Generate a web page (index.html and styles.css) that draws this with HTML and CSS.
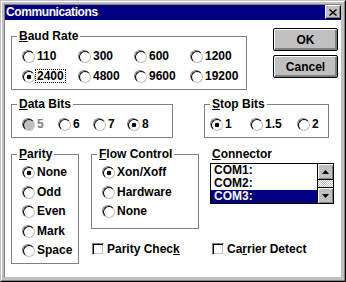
FILE: index.html
```html
<!DOCTYPE html>
<html>
<head>
<meta charset="utf-8">
<link rel="stylesheet" href="styles.css">
</head>
<body>
<div class="window">
 <div class="frame">
  <div class="inner">
   <div class="titlebar">
    <span class="title">Communications</span>
    <span class="close"><svg width="8" height="7" viewBox="0 0 8 7"><path d="M0.5 0.5 L7.5 6.5 M7.5 0.5 L0.5 6.5" stroke="#000" stroke-width="1.4" fill="none"/></svg></span>
   </div>
   <div class="body">
    <div class="row-a">
     <fieldset class="group baud">
      <legend><u>B</u>aud Rate</legend>
      <div class="grid baud-grid">
       <div class="radio"><span class="rb"></span>110</div>
       <div class="radio"><span class="rb"></span>300</div>
       <div class="radio"><span class="rb"></span>600</div>
       <div class="radio"><span class="rb"></span>1200</div>
       <div class="radio"><span class="rb on"></span><span class="focus">2400</span></div>
       <div class="radio"><span class="rb"></span>4800</div>
       <div class="radio"><span class="rb"></span>9600</div>
       <div class="radio"><span class="rb"></span>19200</div>
      </div>
     </fieldset>
     <div class="buttons">
      <div class="btn">OK</div>
      <div class="btn">Cancel</div>
     </div>
    </div>
    <div class="row-b">
     <fieldset class="group data">
      <legend><u>D</u>ata Bits</legend>
      <div class="grid data-grid">
       <div class="radio disabled"><span class="rb"></span>5</div>
       <div class="radio"><span class="rb"></span>6</div>
       <div class="radio"><span class="rb"></span>7</div>
       <div class="radio"><span class="rb on"></span>8</div>
      </div>
     </fieldset>
     <fieldset class="group stop">
      <legend><u>S</u>top Bits</legend>
      <div class="grid stop-grid">
       <div class="radio"><span class="rb on"></span>1</div>
       <div class="radio"><span class="rb"></span>1.5</div>
       <div class="radio"><span class="rb"></span>2</div>
      </div>
     </fieldset>
    </div>
    <div class="row-c">
     <fieldset class="group parity">
      <legend><u>P</u>arity</legend>
      <div class="list parity-list">
       <div class="radio"><span class="rb on"></span>None</div>
       <div class="radio"><span class="rb"></span>Odd</div>
       <div class="radio"><span class="rb"></span>Even</div>
       <div class="radio"><span class="rb"></span>Mark</div>
       <div class="radio"><span class="rb"></span>Space</div>
      </div>
     </fieldset>
     <div class="col-mid">
      <fieldset class="group flow">
       <legend><u>F</u>low Control</legend>
       <div class="list flow-list">
        <div class="radio"><span class="rb on"></span>Xon/Xoff</div>
        <div class="radio"><span class="rb"></span>Hardware</div>
        <div class="radio"><span class="rb"></span>None</div>
       </div>
      </fieldset>
      <div class="check check-parity"><span class="cb"></span>Parity Chec<u>k</u></div>
     </div>
     <div class="col-right">
      <div class="conn-label"><u>C</u>onnector</div>
      <div class="listbox">
       <div class="items">
        <div class="item">COM1:</div>
        <div class="item">COM2:</div>
        <div class="item sel">COM3:</div>
       </div>
       <div class="scroll">
        <div class="sb-btn up"><svg width="7" height="4" viewBox="0 0 7 4"><polygon points="3.5,0 7,4 0,4" fill="#000"/></svg></div>
        <div class="track"></div>
        <div class="sb-btn down"><svg width="7" height="4" viewBox="0 0 7 4"><polygon points="0,0 7,0 3.5,4" fill="#000"/></svg></div>
       </div>
      </div>
      <div class="check check-carrier"><span class="cb"></span>Ca<u>r</u>rier Detect</div>
     </div>
    </div>
   </div>
  </div>
 </div>
</div>
</body>
</html>
```
FILE: styles.css
```css
* { box-sizing: border-box; }
html, body { margin: 0; padding: 0; }
body {
  width: 346px;
  height: 282px;
  overflow: hidden;
  background: #c0c0c0;
  font-family: "Liberation Sans", Arial, sans-serif;
  font-weight: bold;
  font-size: 12px;
  color: #000;
}
.window {
  width: 346px;
  height: 282px;
  border: 1px solid;
  border-color: #c0c0c0 #000 #000 #c0c0c0;
}
.frame {
  height: 100%;
  border: 1px solid;
  border-color: #fff #808080 #808080 #fff;
  padding: 2px;
  background: #c0c0c0;
}
.inner {
  height: 100%;
  border: 1px solid;
  border-color: #808080 #c0c0c0 #c0c0c0 #808080;
  background: #fff;
  display: flex;
  flex-direction: column;
}
.titlebar {
  height: 15px;
  flex: none;
  background: #000080;
  color: #fff;
  display: flex;
  align-items: flex-start;
}
.title {
  flex: 1;
  padding-left: 1px;
  line-height: 14px;
  letter-spacing: -0.4px;
}
.close {
  width: 16px;
  height: 14px;
  background: #c0c0c0;
  border: 1px solid;
  border-color: #fff #000 #000 #fff;
  box-shadow: inset -1px -1px 0 #808080;
  display: flex;
  align-items: center;
  justify-content: center;
}
.body {
  flex: 1;
  padding-left: 6px;
  display: flex;
  flex-direction: column;
}
.row-a, .row-b, .row-c {
  display: flex;
  align-items: flex-start;
}
.group {
  border: 1px solid #808080;
  margin: 0;
  padding: 0;
  min-width: 0;
}
.group legend {
  margin-left: 5px;
  padding: 0 2px;
  line-height: 12px;
}
u { text-decoration-thickness: 1px; text-underline-offset: 1px; }

.baud { width: 236px; margin-top: 10px; }
.grid { display: grid; }
.baud-grid {
  grid-template-columns: 56px 56px 56px auto;
  row-gap: 4px;
  padding: 6px 0 5px 10px;
}
.buttons {
  margin-left: 26px;
  margin-top: 8px;
  display: flex;
  flex-direction: column;
  gap: 4px;
}
.btn {
  width: 65px;
  height: 23px;
  border: 1px solid #000;
  border-radius: 2px;
  background: #c0c0c0;
  box-shadow: inset 1px 1px 0 #fff, inset -2px -2px 0 #808080;
  display: flex;
  align-items: center;
  justify-content: center;
  line-height: 14px;
}

.row-b { margin-top: 8px; }
.data { width: 162px; }
.data-grid {
  grid-template-columns: 36px 35px 34px auto;
  padding: 6px 0 5px 10px;
}
.stop { width: 125px; margin-left: 31px; }
.stop-grid {
  grid-template-columns: 40px 47px auto;
  padding: 6px 0 5px 5px;
}

.row-c { margin-top: 10px; }
.parity { width: 68px; }
.list { display: grid; row-gap: 3.5px; }
.parity-list { padding: 4px 0 5px 10px; }
.col-mid { margin-left: 12px; display: flex; flex-direction: column; }
.flow { width: 108px; }
.flow-list { padding: 4px 0 9px 10px; }

.radio {
  display: flex;
  align-items: center;
  height: 16px;
  line-height: 16px;
  white-space: nowrap;
}
.rb {
  flex: none;
  width: 12px;
  height: 12px;
  margin-right: 3px;
  border-radius: 50%;
  border: 1px solid;
  border-color: #808080 #fff #fff #808080;
}
.rb::before {
  content: "";
  display: block;
  width: 10px;
  height: 10px;
  border-radius: 50%;
  border: 1px solid;
  border-color: #000 #c0c0c0 #c0c0c0 #000;
  background: #fff;
}
.rb.on::before {
  background: radial-gradient(circle, #000 0 2px, #fff 2.6px);
}
.radio.disabled { color: #808080; }
.radio.disabled .rb::before { background: #c0c0c0; }
.focus {
  display: inline-block;
  line-height: 12px;
  padding: 0 1px;
  margin: 0 -2px;
  border: 1px dotted #000;
}

.check {
  display: flex;
  align-items: center;
  height: 16px;
  line-height: 16px;
  white-space: nowrap;
}
.cb {
  flex: none;
  width: 12px;
  height: 12px;
  margin-right: 3px;
  border: 1px solid;
  border-color: #808080 #fff #fff #808080;
  box-shadow: inset 1px 1px 0 #000, inset -1px -1px 0 #c0c0c0;
  background: #fff;
}
.check-parity { margin-top: 12px; margin-left: 1px; }

.col-right { margin-left: 11px; display: flex; flex-direction: column; }
.conn-label { margin-left: 2px; line-height: 12px; }
.listbox {
  margin-top: 3px;
  width: 124px;
  height: 41px;
  border: 1px solid #000;
  display: flex;
}
.items { flex: 1; }
.item { height: 13px; line-height: 13px; padding-left: 3px; }
.item.sel { background: #000080; color: #fff; }
.scroll {
  width: 16px;
  border-left: 1px solid #000;
  display: flex;
  flex-direction: column;
}
.sb-btn {
  height: 16px;
  flex: none;
  background: #c0c0c0;
  box-shadow: inset 1px 1px 0 #fff, inset -1px -1px 0 #808080;
  display: flex;
  align-items: center;
  justify-content: center;
}
.sb-btn.up { border-bottom: 1px solid #000; }
.sb-btn.down { border-top: 1px solid #000; }
.track {
  flex: 1;
  background: repeating-conic-gradient(#c0c0c0 0 25%, #fff 0 50%) 0 0 / 2px 2px;
}
.check-carrier { margin-top: 37px; margin-left: 2px; }
```
